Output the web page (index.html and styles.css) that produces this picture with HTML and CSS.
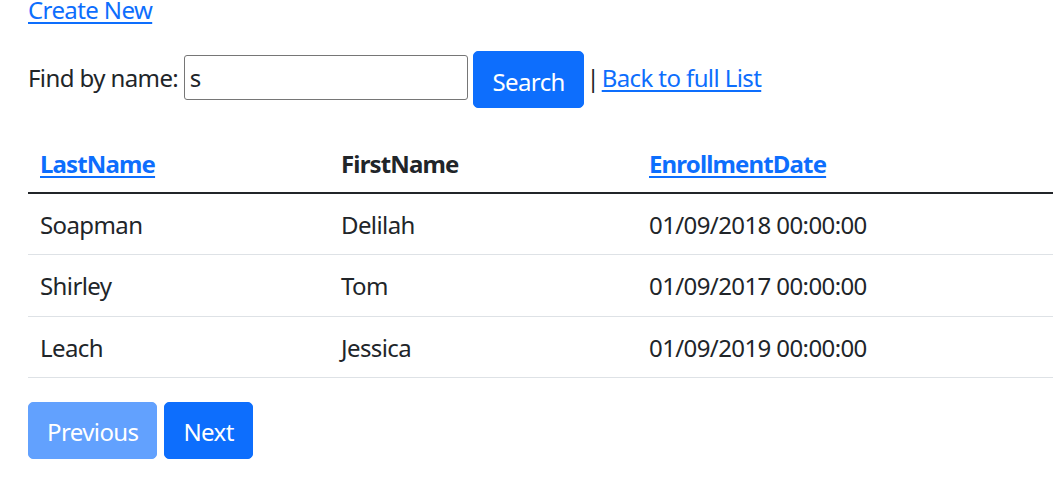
FILE: index.html
```html
<!DOCTYPE html>
<html lang="en">
<head>
<meta charset="utf-8">
<title>Students</title>
<link rel="stylesheet" href="styles.css">
</head>
<body>
<main class="page">
  <p class="create"><a href="#">Create New</a></p>
  <form class="search">
    <p class="search-line">Find by name: <input class="search-input" type="text" value="s"> <button class="btn btn-search" type="button">Search</button><span class="sep"> | </span><a href="#">Back to full List</a></p>
  </form>
  <table class="grid">
    <thead>
      <tr>
        <th class="col-last"><a href="#">LastName</a></th>
        <th class="col-first">FirstName</th>
        <th class="col-date"><a href="#">EnrollmentDate</a></th>
      </tr>
    </thead>
    <tbody>
      <tr><td>Soapman</td><td>Delilah</td><td>01/09/2018 00:00:00</td></tr>
      <tr><td>Shirley</td><td>Tom</td><td>01/09/2017 00:00:00</td></tr>
      <tr><td>Leach</td><td>Jessica</td><td>01/09/2019 00:00:00</td></tr>
    </tbody>
  </table>
  <div class="pager">
    <a class="btn btn-disabled" href="#">Previous</a>
    <a class="btn" href="#">Next</a>
  </div>
</main>
</body>
</html>
```
FILE: styles.css
```css
html, body {
  margin: 0;
  background: #fff;
}
body {
  font-family: "Noto Sans", "Open Sans", sans-serif;
  font-size: 24px;
  line-height: 36px;
  letter-spacing: -0.6px;
  color: #212529;
  overflow: hidden;
}
a {
  color: #0d6efd;
  text-decoration: underline;
  text-underline-offset: 3px;
}
.page {
  margin-top: -8px;
  padding-left: 28px;
}
.create {
  margin: 0 0 23px 0;
}
.search {
  margin: 0;
}
.search-line {
  margin: 0 0 24px 0;
}
.sep {
  word-spacing: -3px;
}
.search-input {
  box-sizing: border-box;
  width: 284px;
  height: 45px;
  padding: 0 5px;
  border: 1px solid #767676;
  border-radius: 3px;
  font-family: inherit;
  font-size: 24px;
  letter-spacing: -0.6px;
  color: #212529;
  vertical-align: baseline;
}
.btn {
  display: inline-block;
  box-sizing: border-box;
  height: 57px;
  padding: 11px 18px 7px 18px;
  border: 1px solid #0d6efd;
  border-radius: 5px;
  background: #0d6efd;
  color: #fff;
  font-family: inherit;
  font-size: 24px;
  letter-spacing: -0.6px;
  line-height: 36px;
  text-decoration: none;
  vertical-align: baseline;
}
.btn-search {
  vertical-align: -3.8px;
}
.btn-disabled {
  background: #62a1fe;
  border-color: #62a1fe;
}
.grid {
  width: 100%;
  border-collapse: collapse;
  margin-bottom: 24px;
}
.grid th, .grid td {
  text-align: left;
  padding: 13px 12px 11.3px 12px;
  line-height: 36px;
  border-bottom: 1px solid #dee2e6;
}
.grid th {
  padding: 13.5px 12px 10.5px 12px;
  font-weight: 700;
  letter-spacing: -0.85px;
  border-bottom: 2px solid #212529;
}
.col-last { width: 277px; }
.col-first { width: 284px; }
.pager {
  display: flex;
  gap: 7px;
}
```
